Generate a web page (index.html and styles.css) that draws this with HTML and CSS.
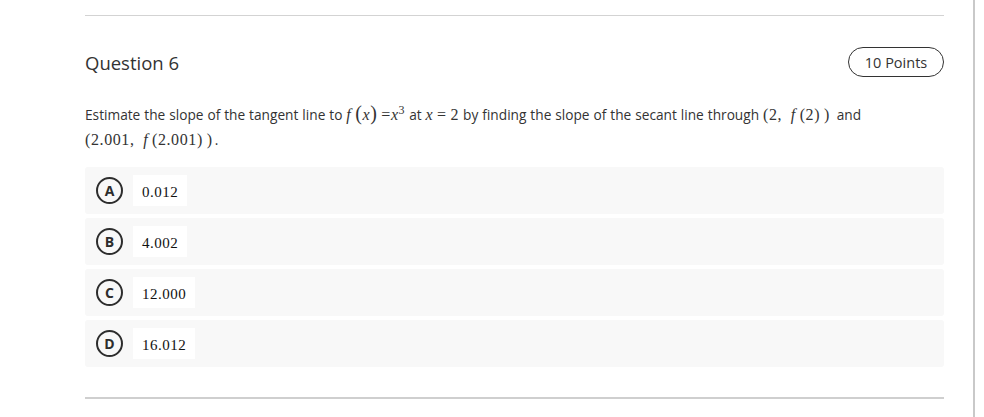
FILE: index.html
```html
<!DOCTYPE html>
<html>
<head>
<meta charset="utf-8">
<link rel="stylesheet" href="styles.css">
</head>
<body>
<div class="page">
  <div class="question">
    <div class="rule"></div>
    <div class="header">
      <h2 class="title">Question 6</h2>
      <span class="points">10 Points</span>
    </div>
    <p class="prompt">Estimate the slope of the tangent line to <span class="m"><i>f</i>&thinsp;<span class="big">(</span><i>x</i><span class="big">)</span>&thinsp;=<i>x</i><sup>3</sup></span> at <span class="m"><i>x</i>&thinsp;=&thinsp;2</span> by finding the slope of the secant line through <span class="m">(2,&ensp;<i>f</i>&thinsp;(2)&thinsp;)</span>&ensp;and<br><span class="m">(2.001,&ensp;<i>f</i>&thinsp;(2.001)&thinsp;)</span>&thinsp;.</p>
    <div class="options">
      <div class="option"><span class="letter">A</span><span class="value">0.012</span></div>
      <div class="option"><span class="letter">B</span><span class="value">4.002</span></div>
      <div class="option"><span class="letter">C</span><span class="value">12.000</span></div>
      <div class="option"><span class="letter">D</span><span class="value">16.012</span></div>
    </div>
    <div class="rule bottom"></div>
  </div>
</div>
</body>
</html>
```
FILE: styles.css
```css
html, body {
  margin: 0;
  padding: 0;
  background: #fff;
}
body {
  font-family: "Open Sans", "Liberation Sans", sans-serif;
  color: #333;
}
.page {
  width: 975px;
  height: 417px;
  box-sizing: border-box;
  border-right: 2px solid #c9c9c9;
  overflow: hidden;
}
.question {
  margin-left: 85px;
  width: 859px;
  padding-top: 15px;
}
.rule {
  height: 0;
  border-top: 1px solid #d3d3d3;
}
.rule.bottom {
  margin-top: 30px;
  border-top: 2px solid #cfcfcf;
}
.header {
  display: flex;
  justify-content: space-between;
  align-items: center;
  margin-top: 31px;
  height: 30px;
}
.title {
  margin: 0;
  font-size: 18.5px;
  font-weight: 400;
  color: #333;
}
.points {
  box-sizing: border-box;
  height: 30px;
  width: 96px;
  border: 1px solid #333;
  border-radius: 15px;
  font-size: 14.5px;
  display: flex;
  align-items: center;
  justify-content: center;
}
.prompt {
  margin: 25px 0 0;
  font-size: 13.7px;
  line-height: 25px;
  word-spacing: 0.4px;
  color: #333;
}
.m {
  font-family: "Liberation Serif", "DejaVu Serif", serif;
  font-size: 16px;
  color: #333;
  letter-spacing: 0.6px;
  word-spacing: 0;
}
.m i {
  font-style: italic;
}
.m .big {
  font-size: 20px;
  line-height: 1;
}
.m sup {
  font-size: 12px;
  line-height: 0;
  vertical-align: 6px;
}
.options {
  margin-top: 15px;
  display: flex;
  flex-direction: column;
  gap: 4px;
}
.option {
  height: 47px;
  background: #f8f8f8;
  border-radius: 3px;
  display: flex;
  align-items: center;
  padding-left: 11px;
  gap: 10px;
}
.letter {
  box-sizing: border-box;
  width: 27px;
  height: 27px;
  border: 2px solid #2d2d2d;
  border-radius: 50%;
  display: flex;
  align-items: center;
  justify-content: center;
  font-size: 14px;
  font-weight: 700;
  color: #2d2d2d;
}
.value {
  background: #fff;
  height: 31px;
  padding: 4px 9px 0;
  display: flex;
  align-items: center;
  box-sizing: border-box;
  font-family: "Liberation Serif", "DejaVu Serif", serif;
  font-size: 15px;
  color: #111;
  letter-spacing: 0.5px;
}
```
